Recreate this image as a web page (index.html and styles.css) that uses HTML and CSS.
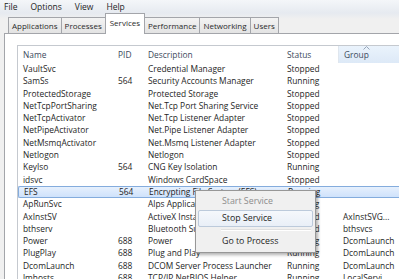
FILE: index.html
```html
<!DOCTYPE html>
<html lang="en">
<head>
    <meta charset="UTF-8">
    <title>Windows Task Manager - Services</title>
    <link rel="stylesheet" href="styles.css">
</head>
<body>
    <div class="menubar">
        <span>File</span>
        <span>Options</span>
        <span>View</span>
        <span>Help</span>
    </div>
    <div class="tabstrip">
        <div class="tab">Applications</div>
        <div class="tab">Processes</div>
        <div class="tab active">Services</div>
        <div class="tab">Performance</div>
        <div class="tab">Networking</div>
        <div class="tab">Users</div>
    </div>
    <div class="panel">
        <div class="list">
            <div class="row head">
                <div>Name</div>
                <div>PID</div>
                <div>Description</div>
                <div>Status</div>
                <div class="sorted">Group
                    <svg class="sort-arrow" width="7" height="4" viewBox="0 0 7 4"><path d="M0.5 3.5 L3.5 0.5 L6.5 3.5" fill="none" stroke="#97a5b8" stroke-width="1"/></svg>
                </div>
            </div>
            <div class="rows" id="rows"></div>
        </div>
    </div>

    <div class="context-menu">
        <div class="item disabled">Start Service</div>
        <div class="item hover">Stop Service</div>
        <div class="sep"></div>
        <div class="item">Go to Process</div>
    </div>

    <script>
        const services = [
            ['VaultSvc', '', 'Credential Manager', 'Stopped', ''],
            ['SamSs', '564', 'Security Accounts Manager', 'Running', ''],
            ['ProtectedStorage', '', 'Protected Storage', 'Stopped', ''],
            ['NetTcpPortSharing', '', 'Net.Tcp Port Sharing Service', 'Stopped', ''],
            ['NetTcpActivator', '', 'Net.Tcp Listener Adapter', 'Stopped', ''],
            ['NetPipeActivator', '', 'Net.Pipe Listener Adapter', 'Stopped', ''],
            ['NetMsmqActivator', '', 'Net.Msmq Listener Adapter', 'Stopped', ''],
            ['Netlogon', '', 'Netlogon', 'Stopped', ''],
            ['KeyIso', '564', 'CNG Key Isolation', 'Running', ''],
            ['idsvc', '', 'Windows CardSpace', 'Stopped', ''],
            ['EFS', '564', 'Encrypting File System (EFS)', 'Running', ''],
            ['ApRunSvc', '', 'Alps Application Service', 'Running', ''],
            ['AxInstSV', '', 'ActiveX Installer (AxInstSV)', 'Stopped', 'AxInstSVG...'],
            ['bthserv', '', 'Bluetooth Support Service', 'Stopped', 'bthsvcs'],
            ['Power', '688', 'Power', 'Running', 'DcomLaunch'],
            ['PlugPlay', '688', 'Plug and Play', 'Running', 'DcomLaunch'],
            ['DcomLaunch', '688', 'DCOM Server Process Launcher', 'Running', 'DcomLaunch'],
            ['lmhosts', '688', 'TCP/IP NetBIOS Helper', 'Running', 'LocalServi...']
        ];

        const rows = document.getElementById('rows');
        services.forEach(s => {
            const row = document.createElement('div');
            row.className = 'row' + (s[0] === 'EFS' ? ' selected' : '');
            s.forEach(text => {
                const cell = document.createElement('div');
                cell.textContent = text;
                row.appendChild(cell);
            });
            rows.appendChild(row);
        });
    </script>
</body>
</html>
```

FILE: styles.css
```css
body {
    margin: 0;
    width: 399px;
    height: 279px;
    overflow: hidden;
    background-color: #f0f0f0;
    font-family: "Open Sans", sans-serif;
    color: #1e1e1e;
    position: relative;
}
.menubar {
    height: 13px;
    display: flex;
    align-items: center;
    padding-left: 4px;
    font-size: 8.5px;
    background: linear-gradient(#f4f6f9, #e6eaf0);
}
.menubar span {
    margin-right: 13px;
}
.tabstrip {
    height: 20px;
    display: flex;
    align-items: flex-end;
    padding-left: 8px;
    background: linear-gradient(#e6eaf0, #f0f0f0 6px);
}
.tab {
    height: 15px;
    line-height: 15px;
    padding: 0 3px;
    margin-right: -1px;
    border: 1px solid #a3a5aa;
    border-bottom: none;
    background: linear-gradient(#f3f3f3, #e3e3e3);
    font-size: 8px;
    color: #2a2a2a;
}
.tab.active {
    height: 20px;
    line-height: 18px;
    padding: 0 4px;
    margin-bottom: -1px;
    background: #fff;
    position: relative;
    z-index: 1;
}
.panel {
    margin-left: 4px;
    border-left: 1px solid #a3a5aa;
    border-top: 1px solid #a3a5aa;
    background-color: #fff;
    padding: 11px 0 0 12px;
    height: 245px;
}
.list {
    border-top: 1px solid #c5c9cf;
    border-left: 1px solid #c5c9cf;
    font-size: 8.4px;
}
.row {
    display: grid;
    grid-template-columns: 95px 30px 139px 56px 1fr;
    height: 12.31px;
    line-height: 12.31px;
    white-space: nowrap;
}
.row > div {
    padding-left: 5px;
    overflow: hidden;
}
.row.head {
    height: 17px;
    line-height: 18px;
    color: #3c4a5c;
}
.head .sorted {
    background: linear-gradient(#eaf3fc, #dde9f7);
    border-left: 1px solid #dfe6ee;
    position: relative;
}
.sort-arrow {
    position: absolute;
    left: 24px;
    top: 0;
}
.row.selected {
    background: linear-gradient(#e6f0fd, #cfe2fb);
    border: 1px solid #84acdd;
    border-right: none;
    border-radius: 2px 0 0 2px;
    height: 10.31px;
    line-height: 10.31px;
}
.context-menu {
    position: absolute;
    left: 195px;
    top: 190px;
    width: 115px;
    padding: 2px;
    background-color: #f0f0f0;
    border: 1px solid #979797;
    box-shadow: 2px 2px 3px rgba(0, 0, 0, 0.3);
    font-size: 8.8px;
}
.context-menu .item {
    height: 15px;
    line-height: 15px;
    padding-left: 23px;
    border: 1px solid transparent;
    border-radius: 2px;
}
.context-menu .item.disabled {
    color: #8d8d8d;
}
.context-menu .item.hover {
    background: linear-gradient(#f5f8fc, #e9eff7);
    border-color: #bccadb;
}
.context-menu .sep {
    height: 1px;
    margin: 2px 2px 2px 23px;
    background-color: #e0e0e0;
    border-bottom: 1px solid #fff;
}
```
